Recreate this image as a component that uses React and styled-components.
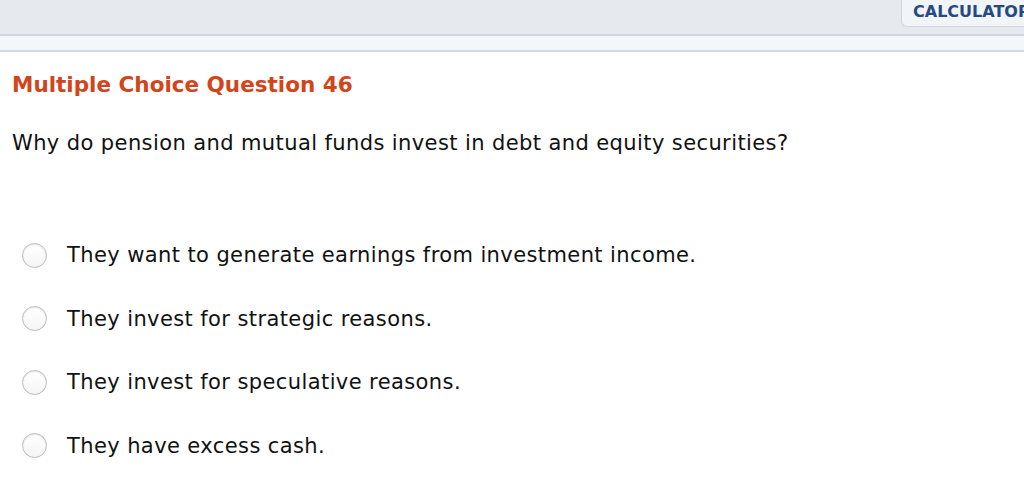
import React from "react";
import styled, { createGlobalStyle } from "styled-components";

const GlobalStyle = createGlobalStyle`
  html, body {
    margin: 0;
    padding: 0;
    background: #ffffff;
    font-family: "DejaVu Sans", Verdana, sans-serif;
  }
`;

const options = [
  "They want to generate earnings from investment income.",
  "They invest for strategic reasons.",
  "They invest for speculative reasons.",
  "They have excess cash.",
];

export default function App() {
  return (
    <>
      <GlobalStyle />
      <Page>
        <TopBar>
          <CalcButton>CALCULATOR</CalcButton>
        </TopBar>
        <SubBar />
        <Content>
          <Title>Multiple Choice Question 46</Title>
          <Question>
            Why do pension and mutual funds invest in debt and equity securities?
          </Question>
          <Options>
            {options.map((text, i) => (
              <Option key={i}>
                <Radio />
                <OptionText>{text}</OptionText>
              </Option>
            ))}
          </Options>
        </Content>
      </Page>
    </>
  );
}

const Page = styled.div`
  width: 1024px;
  height: 495px;
  overflow: hidden;
  background: #ffffff;
`;

const TopBar = styled.div`
  height: 34px;
  background: #e6eaef;
  border-bottom: 2px solid #cdd4de;
  display: flex;
  justify-content: flex-end;
  align-items: flex-start;
  overflow: hidden;
`;

// the button runs past the window's right edge, as in the original
const CalcButton = styled.div`
  box-sizing: border-box;
  height: 27px;
  width: 140px;
  margin-right: -17px;
  padding: 2px 0 0 11px;
  background: #f1f4f8;
  border: 1px solid #cfd6df;
  border-top: none;
  border-radius: 0 0 0 6px;
  color: #264a80;
  font-weight: bold;
  font-size: 16px;
  white-space: nowrap;
`;

const SubBar = styled.div`
  height: 14px;
  background: #f4f7fa;
  border-bottom: 2px solid #d4dae2;
`;

const Content = styled.div`
  padding: 20px 0 0 12px;
`;

const Title = styled.div`
  color: #d2451a;
  font-weight: bold;
  font-size: 21.5px;
  line-height: 26px;
`;

const Question = styled.div`
  margin-top: 33px;
  color: #111111;
  font-size: 21px;
  letter-spacing: 0.4px;
  line-height: 24px;
`;

const Options = styled.div`
  margin-top: 88px;
  padding-left: 10px;
  display: flex;
  flex-direction: column;
  gap: 39.5px;
`;

const Option = styled.div`
  display: flex;
  align-items: center;
  height: 24px;
`;

const Radio = styled.span`
  box-sizing: border-box;
  width: 25px;
  height: 25px;
  border-radius: 50%;
  border: 1.5px solid #bdbdbd;
  background: linear-gradient(#ffffff, #f5f5f5);
  box-shadow: inset 0 1px 2px rgba(0, 0, 0, 0.1);
  flex-shrink: 0;
`;

const OptionText = styled.span`
  margin-left: 20px;
  color: #111111;
  font-size: 21px;
  letter-spacing: 0.4px;
`;
